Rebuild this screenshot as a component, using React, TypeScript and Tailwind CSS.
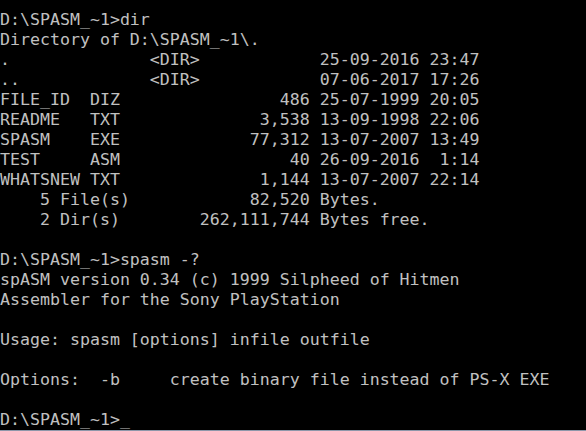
import React from "react";

const files = [
  ["FILE_ID", "DIZ", "486", "25-07-1999", "20:05"],
  ["README", "TXT", "3,538", "13-09-1998", "22:06"],
  ["SPASM", "EXE", "77,312", "13-07-2007", "13:49"],
  ["TEST", "ASM", "40", "26-09-2016", "1:14"],
  ["WHATSNEW", "TXT", "1,144", "13-07-2007", "22:14"],
];

const lines: string[] = [
  "D:\\SPASM_~1>dir",
  "Directory of D:\\SPASM_~1\\.",
  ".".padEnd(15) + "<DIR>".padEnd(17) + "25-09-2016 23:47",
  "..".padEnd(15) + "<DIR>".padEnd(17) + "07-06-2017 17:26",
  ...files.map(
    ([name, ext, size, date, time]) =>
      name.padEnd(8) + " " + ext.padEnd(3) + size.padStart(19) + " " + date + " " + time.padStart(5)
  ),
  "    5 File(s)" + "82,520".padStart(18) + " Bytes.",
  "    2 Dir(s)" + "262,111,744".padStart(19) + " Bytes free.",
  "",
  "D:\\SPASM_~1>spasm -?",
  "spASM version 0.34 (c) 1999 Silpheed of Hitmen",
  "Assembler for the Sony PlayStation",
  "",
  "Usage: spasm [options] infile outfile",
  "",
  "Options:  -b     create binary file instead of PS-X EXE",
  "",
  "D:\\SPASM_~1>_",
];

export default function App() {
  return (
    <div className="w-[586px] h-[431px] bg-black flex flex-col overflow-hidden">
      <pre
        className="flex-1 pt-[10px] m-0 text-[16.6px] leading-[20px] text-[#c0c0c0] whitespace-pre"
        style={{ fontFamily: "'DejaVu Sans Mono', monospace" }}
      >
        {lines.map((l, i) => (
          <div key={i} className="h-[20px]">{l}</div>
        ))}
      </pre>
      <div className="h-px bg-[#8e97aa]" />
    </div>
  );
}
